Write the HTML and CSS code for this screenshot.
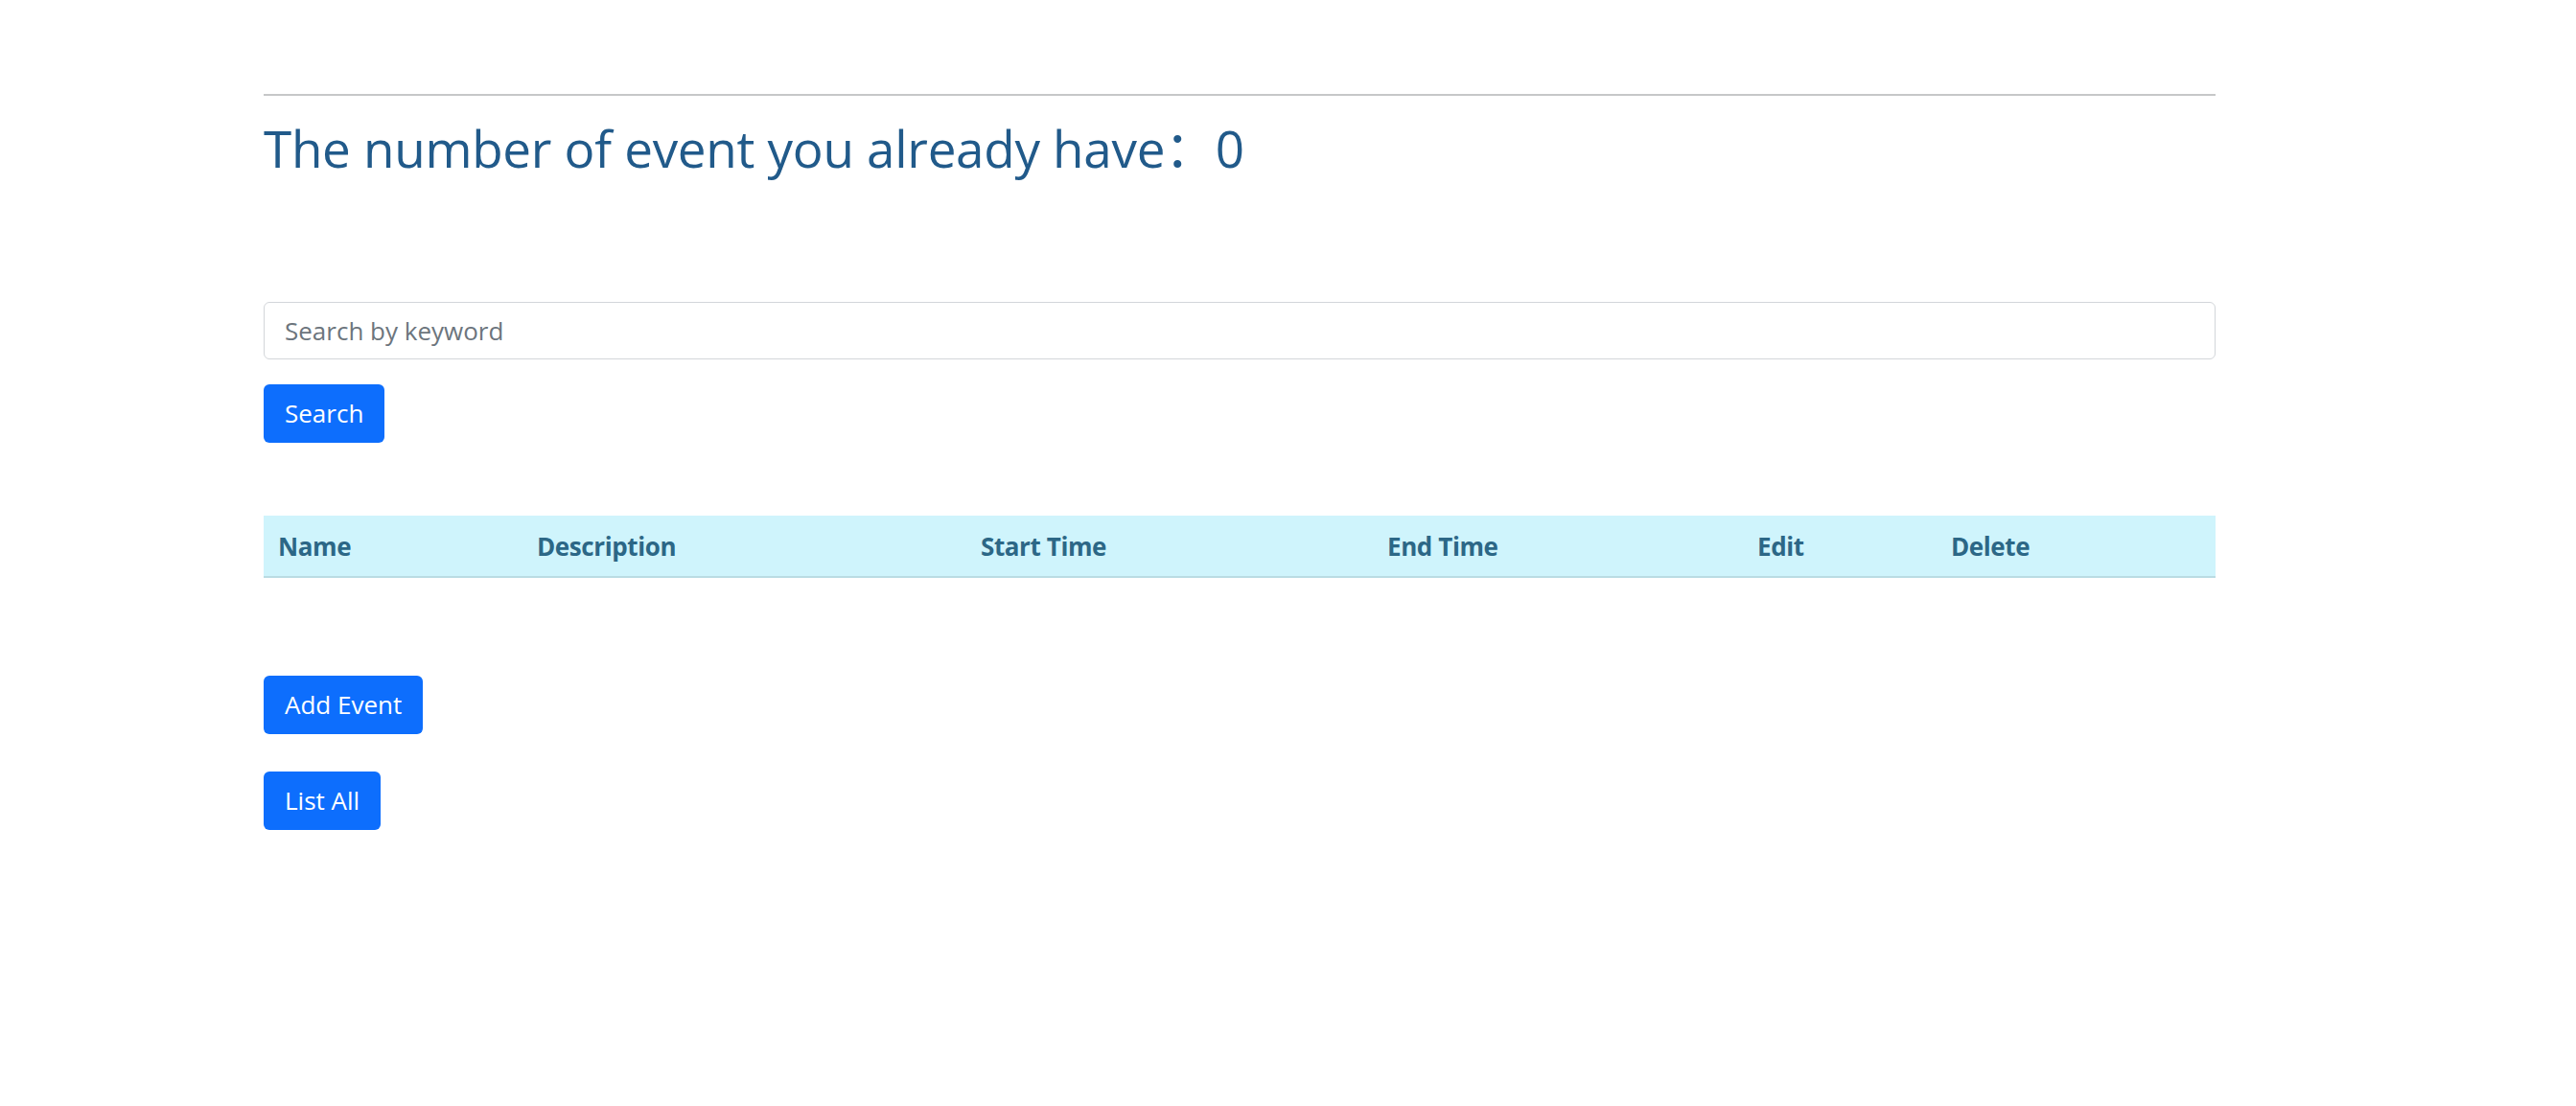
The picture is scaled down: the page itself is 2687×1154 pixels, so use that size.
FILE: index.html
```html
<!DOCTYPE html>
<html lang="en">
<head>
<meta charset="utf-8">
<title>Events</title>
<link rel="stylesheet" href="styles.css">
</head>
<body>
<div class="wrap">
  <hr class="rule">
  <h2 class="count">The number of event you already have：0</h2>
  <input class="search-input" type="text" placeholder="Search by keyword">
  <div class="row-btn first"><button class="btn">Search</button></div>
  <table class="events">
    <thead>
      <tr>
        <th class="c-name">Name</th>
        <th class="c-desc">Description</th>
        <th class="c-start">Start Time</th>
        <th class="c-end">End Time</th>
        <th class="c-edit">Edit</th>
        <th class="c-del">Delete</th>
      </tr>
    </thead>
    <tbody></tbody>
  </table>
  <div class="row-btn add"><button class="btn">Add Event</button></div>
  <div class="row-btn list"><button class="btn">List All</button></div>
</div>
</body>
</html>
```
FILE: styles.css
```css
html, body {
  margin: 0;
  padding: 0;
  background: #ffffff;
}
body {
  font-family: "Open Sans", "Noto Sans", "Noto Sans CJK SC", sans-serif;
  color: #212529;
}
.wrap {
  margin-left: 275px;
  width: 2036px;
  padding-top: 98px;
}
.rule {
  margin: 0;
  border: 0;
  border-top: 2px solid #c6c7c8;
  height: 0;
}
.count {
  margin: 21px 0 0 0;
  font-size: 53px;
  line-height: 68px;
  font-weight: 400;
  color: #215a8a;
  letter-spacing: -0.3px;
}
.search-input {
  display: block;
  box-sizing: border-box;
  width: 100%;
  height: 60px;
  margin-top: 126px;
  padding: 0 21px;
  border: 1px solid #d3d6da;
  border-radius: 6px;
  font-family: inherit;
  font-size: 26px;
  color: #212529;
  outline: none;
}
.search-input::placeholder {
  color: #6c757d;
}
.row-btn {
  display: flex;
}
.row-btn.first { margin-top: 26px; }
.row-btn.add { margin-top: 102px; }
.row-btn.list { margin-top: 39px; }
.btn {
  box-sizing: border-box;
  height: 61px;
  padding: 0 22px;
  border: 0;
  border-radius: 6px;
  background: #0d6efd;
  color: #ffffff;
  font-family: inherit;
  font-size: 26px;
  line-height: 61px;
}
.events {
  width: 100%;
  margin-top: 76px;
  border-collapse: collapse;
}
.events th {
  box-sizing: border-box;
  height: 64px;
  padding: 0 15px;
  background: #cff4fc;
  border-bottom: 2px solid #badce3;
  color: #2c6786;
  font-size: 26px;
  font-weight: 700;
  text-align: left;
  letter-spacing: -0.4px;
}
.c-name { width: 270px; }
.c-desc { width: 463px; }
.c-start { width: 424px; }
.c-end { width: 386px; }
.c-edit { width: 202px; }
.c-del { width: 291px; }
```
